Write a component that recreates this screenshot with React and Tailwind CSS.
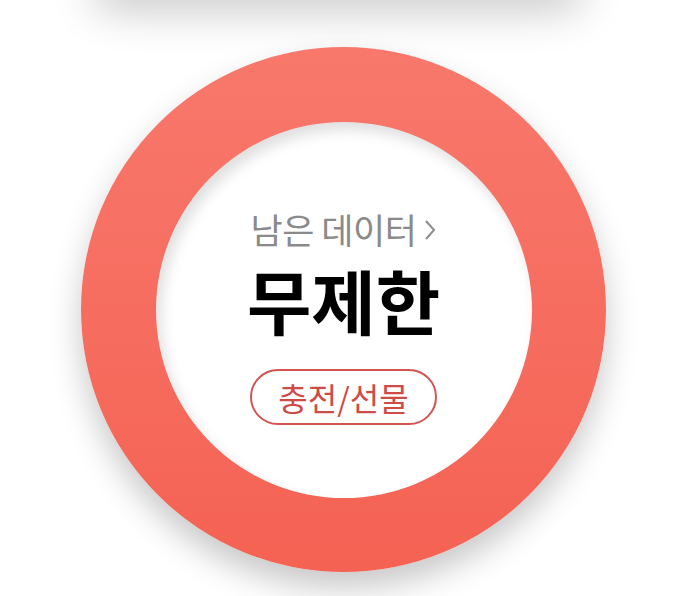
import React from "react";

const font = { fontFamily: '"Noto Sans CJK KR", "Noto Sans", sans-serif' };

const DataRing = () => {
    return (
        <div className="ml-[11px] mt-[52px] w-[525px] h-[525px] shrink-0 rounded-full bg-linear-to-b from-[#f8786c] to-[#f46253] shadow-[0_16px_32px_rgba(0,0,0,0.22)] flex items-center justify-center">
            <div className="w-[376px] h-[376px] rounded-full bg-white shadow-[inset_5px_8px_14px_rgba(0,0,0,0.13)] flex flex-col items-center justify-center pt-[14px]">
                <button className="flex items-center text-[#8a8a8a]">
                    <span className="text-[35px] leading-[40px] tracking-[-0.5px]">남은 데이터</span>
                    <svg width="12" height="22" viewBox="0 0 12 22" className="ml-[8px] mt-[2px]">
                        <polyline points="2,2 10,11 2,20" fill="none" stroke="#8d8d8d" strokeWidth="2" />
                    </svg>
                </button>
                <p className="mt-[15px] text-[70px] leading-[72px] font-bold text-black">무제한</p>
                <button className="mt-[33px] w-[187px] h-[56px] rounded-full border-2 border-[#d35450] text-[#cf4b46] text-[32px] leading-none flex items-center justify-center">
                    충전/선물
                </button>
            </div>
        </div>
    );
};

const App = () => {
    return (
        <div className="w-full h-[596px] bg-white overflow-hidden flex flex-col items-center" style={font}>
            {/* card above, mostly off screen */}
            <div className="w-[490px] h-[40px] -mt-[45px] shrink-0 rounded-3xl bg-white shadow-[0_14px_44px_rgba(0,0,0,0.24)]" />
            <DataRing />
        </div>
    );
};

export default App;
